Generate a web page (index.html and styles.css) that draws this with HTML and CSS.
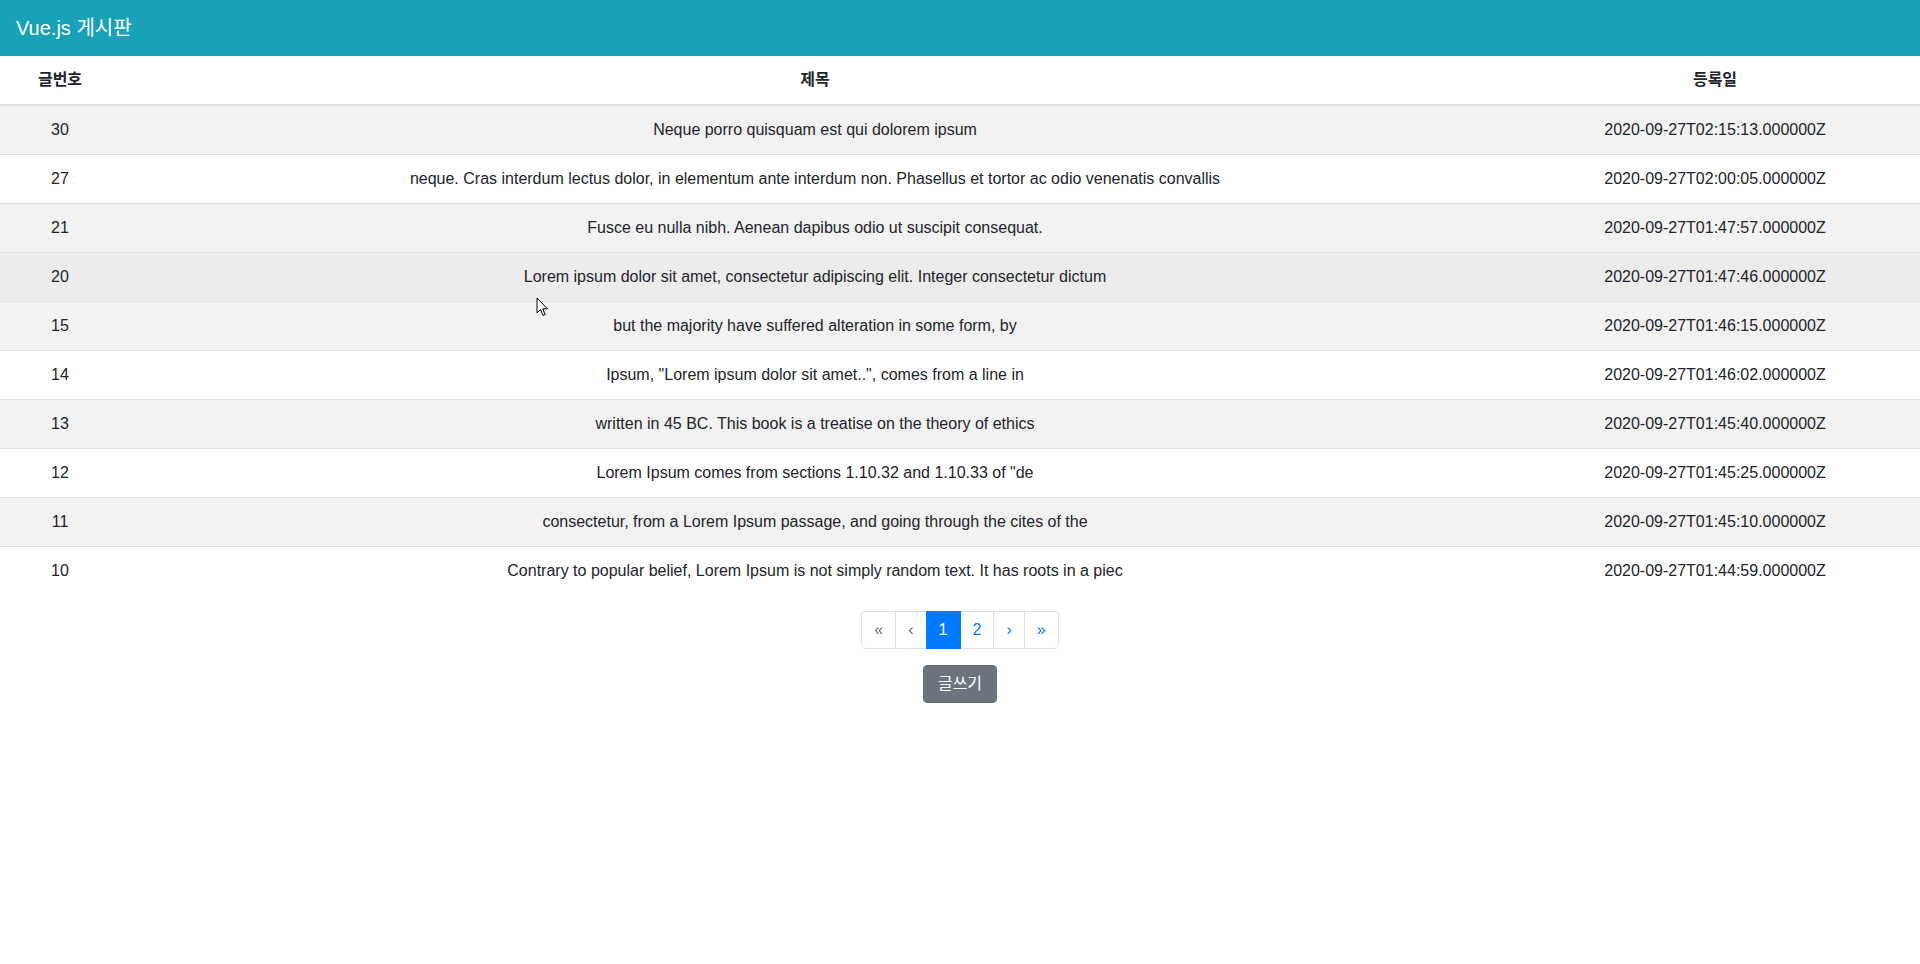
FILE: index.html
```html
<!DOCTYPE html>
<html lang="ko">
<head>
<meta charset="utf-8">
<title>Vue.js 게시판</title>
<link rel="stylesheet" href="styles.css">
</head>
<body>
<nav class="navbar"><span class="brand">Vue.js 게시판</span></nav>
<main class="content">
  <table class="board">
    <thead>
      <tr><th class="col-no">글번호</th><th>제목</th><th class="col-date">등록일</th></tr>
    </thead>
    <tbody>
      <tr><td>30</td><td>Neque porro quisquam est qui dolorem ipsum</td><td>2020-09-27T02:15:13.000000Z</td></tr>
      <tr><td>27</td><td>neque. Cras interdum lectus dolor, in elementum ante interdum non. Phasellus et tortor ac odio venenatis convallis</td><td>2020-09-27T02:00:05.000000Z</td></tr>
      <tr><td>21</td><td>Fusce eu nulla nibh. Aenean dapibus odio ut suscipit consequat.</td><td>2020-09-27T01:47:57.000000Z</td></tr>
      <tr class="hover"><td>20</td><td>Lorem ipsum dolor sit amet, consectetur adipiscing elit. Integer consectetur dictum</td><td>2020-09-27T01:47:46.000000Z</td></tr>
      <tr><td>15</td><td>but the majority have suffered alteration in some form, by</td><td>2020-09-27T01:46:15.000000Z</td></tr>
      <tr><td>14</td><td>Ipsum, "Lorem ipsum dolor sit amet..", comes from a line in</td><td>2020-09-27T01:46:02.000000Z</td></tr>
      <tr><td>13</td><td>written in 45 BC. This book is a treatise on the theory of ethics</td><td>2020-09-27T01:45:40.000000Z</td></tr>
      <tr><td>12</td><td>Lorem Ipsum comes from sections 1.10.32 and 1.10.33 of "de</td><td>2020-09-27T01:45:25.000000Z</td></tr>
      <tr><td>11</td><td>consectetur, from a Lorem Ipsum passage, and going through the cites of the</td><td>2020-09-27T01:45:10.000000Z</td></tr>
      <tr><td>10</td><td>Contrary to popular belief, Lorem Ipsum is not simply random text. It has roots in a piec</td><td>2020-09-27T01:44:59.000000Z</td></tr>
    </tbody>
  </table>
  <ul class="pagination">
    <li class="page-link disabled">«</li>
    <li class="page-link disabled">‹</li>
    <li class="page-link active">1</li>
    <li class="page-link">2</li>
    <li class="page-link">›</li>
    <li class="page-link">»</li>
  </ul>
  <button class="btn">글쓰기</button>
</main>
<svg class="cursor" width="13" height="21" viewBox="0 0 13 21"><path d="M1 1 L1 16 L4.5 12.5 L7 18.5 L9.2 17.6 L6.8 11.8 L11.5 11.8 Z" fill="#fff" stroke="#000" stroke-width="1" stroke-linejoin="miter"/></svg>
</body>
</html>
```
FILE: styles.css
```css
* { box-sizing: border-box; }
body {
  margin: 0;
  font-family: "Liberation Sans", Arial, "Noto Sans CJK KR", sans-serif;
  font-size: 16px;
  line-height: 1.5;
  color: #212529;
  background: #fff;
  position: relative;
}
.navbar {
  background: #17a2b8;
  padding: 8px 16px;
  display: flex;
  align-items: center;
}
.brand {
  color: #fff;
  font-size: 20px;
  line-height: 30px;
  padding: 5px 0;
}
.content {
  display: flex;
  flex-direction: column;
  align-items: center;
}
.board {
  width: 100%;
  border-collapse: collapse;
  margin-bottom: 16px;
  table-layout: fixed;
}
.board th, .board td {
  padding: 12px;
  text-align: center;
  vertical-align: top;
  border-top: 1px solid #dee2e6;
}
.board th {
  border-top: none;
  border-bottom: 2px solid #dee2e6;
  font-weight: bold;
}
.col-no { width: 120px; }
.col-date { width: 410px; }
.board tbody tr:nth-child(odd) { background: rgba(0,0,0,0.05); }
.board tbody tr.hover { background: rgba(0,0,0,0.075); }
.pagination {
  display: flex;
  list-style: none;
  margin: 0 0 16px;
  padding: 0;
}
.page-link {
  padding: 7px 12px;
  line-height: 22px;
  color: #007bff;
  border: 1px solid #dee2e6;
  margin-left: -1px;
  background: #fff;
}
.page-link.disabled { color: #6c757d; }
.page-link:first-child { margin-left: 0; border-radius: 4px 0 0 4px; }
.page-link:last-child { border-radius: 0 4px 4px 0; }
.page-link.active {
  background: #007bff;
  border-color: #007bff;
  color: #fff;
  position: relative;
  z-index: 1;
}
.btn {
  font-family: inherit;
  font-size: 16px;
  line-height: 24px;
  padding: 6px 14px;
  color: #fff;
  background: #6c757d;
  border: 1px solid #6c757d;
  border-radius: 4px;
}
.cursor {
  position: absolute;
  left: 536px;
  top: 297px;
}
```
